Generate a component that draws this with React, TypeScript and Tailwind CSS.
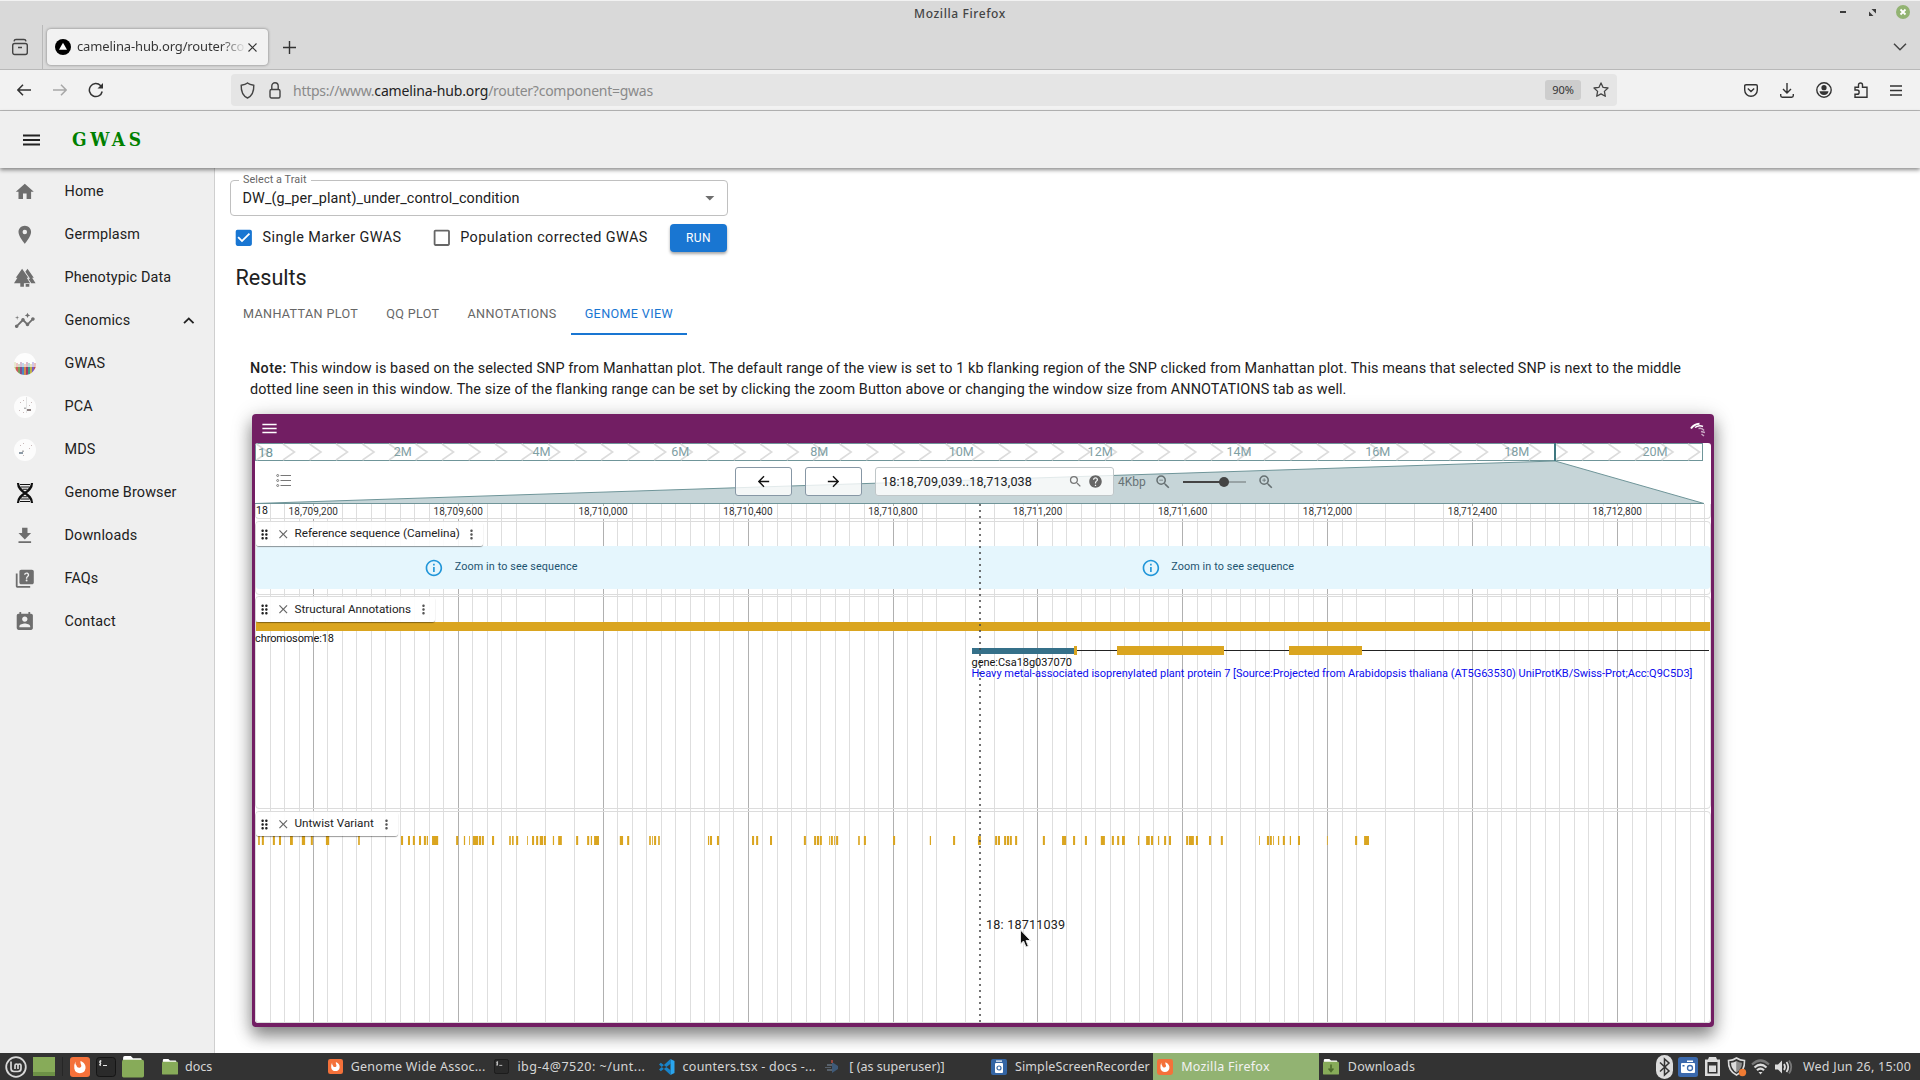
import React from "react";
import {
  MdHome, MdRoom, MdForest, MdInsights, MdKeyboardArrowUp, MdDownload, MdQuiz, MdPermContactCalendar,
  MdDragIndicator, MdClose, MdMoreVert, MdInfoOutline, MdSearch, MdHelp, MdZoomIn, MdZoomOut,
  MdArrowBack, MdArrowForward, MdMenu, MdArrowDropDown, MdCheckBox, MdCheckBoxOutlineBlank,
} from "react-icons/md";

const ubuntu = "font-['Noto_Sans',sans-serif]";

/* ---------- Browser chrome ---------- */

function TitleBar() {
  return (
    <div className="relative flex h-[25px] shrink-0 items-center justify-center border-t border-[#f2f2f2] bg-[#d9d9d9] pt-[2px]">
      <span className={`${ubuntu} text-[12px] font-medium tracking-[0.6px] text-[#444]`}>Mozilla Firefox</span>
      <div className="absolute right-[10px] top-[4px] flex items-center">
        <span className="mr-[23px] h-[2px] w-[6px] bg-[#3c3c3c]" />
        <svg className="mr-[20px]" width="7" height="7" viewBox="0 0 7 7">
          <path d="M2.5 0H7V4.5ZM0 2.5V7H4.500Z" fill="#3c3c3c" />
        </svg>
        <svg width="14" height="14" viewBox="0 0 14 14">
          <circle cx="7" cy="7" r="7" fill="#92b372" />
          <path d="M4.500 4.500l5 5M9.500 4.500l-5 5" stroke="#fff" strokeWidth="1.8" />
        </svg>
      </div>
    </div>
  );
}

function TabBar() {
  return (
    <div className="flex h-[45px] shrink-0 border-b border-[#b9b9b9] bg-[#d9d9d9]">
      <div className="flex w-[43px] items-center justify-center border-r border-[#b9b9b9] pr-[2px]">
        <svg width="18" height="18" viewBox="0 0 18 18" fill="none" stroke="#444" strokeWidth="1.4">
          <rect x="1.700" y="5.500" width="14.600" height="11" rx="2" />
          <path d="M3 3.300Q3.300 1.500 5 1.500H13Q14.700 1.500 15 3.300M7 9.500H11" />
        </svg>
      </div>
      <div className="ml-[4px] mt-[4px] flex h-[36px] w-[221px] items-center rounded-[4px] bg-[#f2f2f2] pl-[8px] shadow-[0_0_3px_rgba(0,0,0,0.45)]">
        <svg width="16" height="16" viewBox="0 0 16 16">
          <circle cx="8" cy="8" r="8" fill="#000" />
          <path d="M8 3.800L12 10.800H4Z" fill="#fff" />
        </svg>
        <div className={`${ubuntu} ml-[6px] w-[167px] overflow-hidden whitespace-nowrap bg-[linear-gradient(to_right,#333_86%,#e0e0e0_100%)] bg-clip-text text-[13px] tracking-[-0.14px] text-transparent`}>
          camelina-hub.org/router?co
        </div>
        <svg className="ml-[4px]" width="9" height="9" viewBox="0 0 9 9" stroke="#333" strokeWidth="1.1">
          <path d="M.5.5l8 8M8.500.5l-8 8" />
        </svg>
      </div>
      <svg className="ml-[15px] mt-[16px]" width="13" height="13" viewBox="0 0 13 13" stroke="#333" strokeWidth="1.4">
        <path d="M6.500 0v13M0 6.500h13" />
      </svg>
      <svg className="ml-auto mr-[13px] mt-[18px]" width="14" height="8" viewBox="0 0 14 8" fill="none" stroke="#444" strokeWidth="1.5">
        <path d="M1 .8l6 6 6-6" />
      </svg>
    </div>
  );
}

function NavBar() {
  return (
    <div className="flex h-[41px] shrink-0 items-center border-b border-[#b9b9b9] bg-[#f2f2f2]">
      <div className="flex w-[231px] items-center pl-[17px]">
        <svg width="14" height="12" viewBox="0 0 14 12" fill="none" stroke="#333" strokeWidth="1.5">
          <path d="M14 6H1M6 .8L.9 6 6 11.200" />
        </svg>
        <svg className="ml-[22px]" width="14" height="12" viewBox="0 0 14 12" fill="none" stroke="#a8a8a8" strokeWidth="1.5">
          <path d="M0 6H13M8 .8L13.100 6 8 11.200" />
        </svg>
        <svg className="ml-[21px]" width="16" height="16" viewBox="0 0 16 16" fill="none" stroke="#333" strokeWidth="1.5">
          <path d="M14.200 9.500A6.500 6.500 0 1 1 12.500 3.500L14 5" />
          <path d="M15 1v5.500H9.500Z" fill="#333" stroke="none" />
        </svg>
      </div>
      <div className="flex h-[32px] w-[1386px] items-center rounded-[4px] bg-[#e5e5e5] pl-[9px] pr-[8px]">
        <svg width="15" height="17" viewBox="0 0 15 17" fill="none" stroke="#444" strokeWidth="1.4">
          <path d="M7.500 1C6 2.300 3.500 3 1.200 3.300 1 9.500 2.500 13.800 7.500 16 12.500 13.800 14 9.500 13.800 3.300 11.500 3 9 2.300 7.500 1Z" />
        </svg>
        <svg className="ml-[14px]" width="12" height="17" viewBox="0 0 12 17" fill="none" stroke="#444" strokeWidth="1.4">
          <rect x="1" y="7.500" width="10" height="8.500" rx="1.500" />
          <path d="M2.800 7.500V4a3.200 3.200 0 0 1 6.400 0V7.500" />
        </svg>
        <span className={`${ubuntu} ml-[12px] whitespace-nowrap text-[14px] tracking-[-0.26px] text-[#8a8a8a]`}>
          https://www.<span className="tracking-[-0.15px] text-[#222]">camelina-hub.org</span>/router?component=gwas
        </span>
        <span className={`${ubuntu} ml-auto flex h-[20px] w-[36px] items-center justify-center rounded-[3px] bg-[#cdcdcd] text-[11px] text-[#333]`}>90%</span>
        <svg className="ml-[12px]" width="16" height="16" viewBox="0 0 16 16" fill="none" stroke="#444" strokeWidth="1.3" strokeLinejoin="round">
          <path d="M8 .9l2.100 4.500 4.900.6-3.600 3.400.9 4.900L8 11.900l-4.300 2.400.9-4.900L1 6l4.900-.6Z" />
        </svg>
      </div>
      <div className="ml-auto mr-[18px] flex items-center gap-[22px] text-[#333]">
        <svg width="14" height="13" viewBox="0 0 14 13" fill="none" stroke="currentColor" strokeWidth="1.4">
          <path d="M2 .8H12Q13.300.8 13.300 2V6A6.300 6.200 0 0 1 .7 6V2Q.7.8 2 .8ZM3.800 4.500L7 7.500l3.200-3" />
        </svg>
        <svg width="14" height="15" viewBox="0 0 14 15" fill="none" stroke="currentColor" strokeWidth="1.4">
          <path d="M7 0V10M3 6l4 4 4-4M.7 11v1.500Q.7 14.200 2.300 14.200h9.400q1.600 0 1.600-1.700V11" />
        </svg>
        <svg width="16" height="16" viewBox="0 0 16 16" fill="none" stroke="currentColor" strokeWidth="1.4">
          <circle cx="8" cy="8" r="7.200" />
          <circle cx="8" cy="5.700" r="2.600" fill="currentColor" stroke="none" />
          <path d="M3.500 9.300h9Q12 13 8 13T3.500 9.300Z" fill="currentColor" stroke="none" />
        </svg>
        <svg width="14" height="16" viewBox="0 0 14 16" fill="none" stroke="currentColor" strokeWidth="1.4">
          <path d="M1 8V5.200h3.500V3a2 2 0 0 1 4 0V5.200H13V15.200H1V12.300H3a2.100 2.100 0 0 0 0-4.300Z" />
        </svg>
        <svg width="12" height="11" viewBox="0 0 12 11" stroke="currentColor" strokeWidth="1.3">
          <path d="M0 1h12M0 5.500h12M0 10h12" />
        </svg>
      </div>
    </div>
  );
}

/* ---------- Sidebar ---------- */

const DnaIcon = () => (
  <svg width="18" height="20" viewBox="0 0 18 20" fill="none" stroke="#111">
    <path d="M2 0C2 10 16 10 16 20M16 0C16 10 2 10 2 20" strokeWidth="2.200" />
    <path d="M4 1.500h10M4.500 4h9M4.500 16h9M4 18.500h10M6.500 6.200h5M6.500 13.800h5" strokeWidth="1.100" />
  </svg>
);

const GwasThumb = () => (
  <svg width="22" height="22" viewBox="0 0 22 22">
    <clipPath id="thumb"><circle cx="11" cy="11" r="11" /></clipPath>
    <g clipPath="url(#thumb)">
      <rect width="22" height="22" fill="#fdfdfd" />
      {["#b9c27a", "#d05a5a", "#7a9a5a", "#8a4a8a", "#4a8ac0", "#d08a4a", "#a03a6a", "#3a9a8a", "#c0b04a", "#7a5ac0", "#c04a4a"].map((c, i) => (
        <g key={i} fill={c}>
          <rect x={i * 2} y="14" width="2" height="8" />
          <rect x={i * 2} y={9 + (i % 3)} width="2" height="6" opacity="0.35" />
        </g>
      ))}
    </g>
  </svg>
);

const ScatterThumb = ({ flip = false }: { flip?: boolean }) => (
  <svg width="22" height="22" viewBox="0 0 22 22">
    <circle cx="11" cy="11" r="11" fill="#fcfcfc" />
    {!flip && <path d="M12.500 1v16" stroke="#e4e4e4" />}
    <g fill="#c9b9b9">
      <rect x="6" y="6" width="1" height="1" /><rect x="9" y="4" width="1" height="1" /><rect x="15" y="9" width="1" height="1" />
      <rect x="5" y="14" width="1" height="1" /><rect x="9" y="16" width="1" height="1" /><rect x="17" y="6" width="1" height="1" />
    </g>
    <rect x={flip ? 5 : 13} y="13" width="4" height="2" fill={flip ? "#8c9aa6" : "#8c8080"} />
    <rect x={flip ? 8 : 10} y="11.500" width="2" height="1.500" fill="#b3b3b3" />
  </svg>
);

const menu: { label: string; icon: React.ReactNode; open?: boolean }[] = [
  { label: "Home", icon: <MdHome /> },
  { label: "Germplasm", icon: <MdRoom /> },
  { label: "Phenotypic Data", icon: <MdForest /> },
  { label: "Genomics", icon: <MdInsights />, open: true },
  { label: "GWAS", icon: <GwasThumb /> },
  { label: "PCA", icon: <ScatterThumb /> },
  { label: "MDS", icon: <ScatterThumb flip /> },
  { label: "Genome Browser", icon: <DnaIcon /> },
  { label: "Downloads", icon: <MdDownload /> },
  { label: "FAQs", icon: <MdQuiz /> },
  { label: "Contact", icon: <MdPermContactCalendar /> },
];

function Sidebar() {
  return (
    <nav className="w-[215px] shrink-0 border-r border-[#cfcfcf] bg-[#efefef] pt-[2px]">
      {menu.map((m) => (
        <div key={m.label} className="flex h-[43px] items-center pl-[14px]">
          <span className="flex w-[22px] items-center justify-center text-[21.6px] text-[#6e6e6e]">{m.icon}</span>
          <span className="ml-[28.5px] whitespace-nowrap text-[14.4px] tracking-[0.135px] text-[#212121]">{m.label}</span>
          {m.open && <MdKeyboardArrowUp className="ml-auto mr-[14px] text-[21.6px] text-[#222]" />}
        </div>
      ))}
    </nav>
  );
}

/* ---------- GWAS form ---------- */

function TraitForm() {
  return (
    <>
      <div className="relative mt-[12px] flex h-[36px] w-[498px] shrink-0 items-center rounded-[4px] border border-[#c0c0c0] pl-[11.5px] pr-[6px]">
        <span className="absolute -top-[9px] left-[8px] bg-white px-[4px] text-[10.8px] leading-[15px] tracking-[0.1px] text-[#666]">Select a Trait</span>
        <span className="pt-[2px] text-[14.4px] tracking-[0.105px] text-[#212121]">DW_(g_per_plant)_under_control_condition</span>
        <MdArrowDropDown className="ml-auto text-[21.6px] text-[#6e6e6e]" />
      </div>
      <div className="mt-[8px] flex h-[28px] shrink-0 items-center pl-[3px]">
        <MdCheckBox className="text-[21.6px] text-[#1976d2]" />
        <span className="ml-[8px] w-[140px] whitespace-nowrap text-[14.4px] tracking-[0.41px] text-[#212121]">Single Marker GWAS</span>
        <MdCheckBoxOutlineBlank className="ml-[28px] text-[21.6px] text-[#666]" />
        <span className="ml-[8px] w-[190px] whitespace-nowrap text-[14.4px] tracking-[0.41px] text-[#212121]">Population corrected GWAS</span>
        <button className="ml-auto mr-[1193px] flex h-[28px] w-[57px] items-center justify-center rounded-[4px] bg-[#1976d2] text-[12px] tracking-[0.36px] text-white shadow-[0_2px_3px_rgba(0,0,0,0.35)]">RUN</button>
      </div>
    </>
  );
}

function Tabs() {
  const base = "flex h-[43px] items-center whitespace-nowrap px-[14px] pt-[2px] text-[12.6px] tracking-[0.36px]";
  return (
    <div className="-ml-[1px] mt-[1px] flex shrink-0">
      {["MANHATTAN PLOT", "QQ PLOT", "ANNOTATIONS"].map((t) => (
        <span key={t} className={`${base} text-[#666]`}>{t}</span>
      ))}
      <span className="flex h-[43px] items-center whitespace-nowrap border-b-2 border-[#1976d2] px-[14px] pt-[4px] text-[12.6px] tracking-[0.36px] text-[#1976d2]">
        GENOME VIEW
      </span>
    </div>
  );
}

/* ---------- Genome view ---------- */

const PITCH = 14.49;
const skipped = [15, 17, 19, 44, 46, 48, 73, 75, 77];
const lines = Array.from({ length: 100 }, (_, i) => i - 3).filter((i) => !skipped.includes(i) && 313 + i * PITCH < 1710);

const variantsA: [number, number][] = [
  [20, 24], [29, 34], [56, 61], [71, 76], [98, 105], [127, 135], [149, 154], [186, 194], [265, 269], [370, 375], [387, 392], [399, 404],
  [414, 419], [426, 431], [433, 436], [446, 461], [505, 510], [524, 527], [537, 539], [546, 559], [561, 566], [568, 573], [593, 598],
  [635, 639], [642, 646], [652, 657], [679, 681], [691, 696], [701, 706], [710, 718], [720, 725], [742, 745], [755, 764], [799, 804],
  [826, 831], [835, 838], [843, 855], [906, 914], [924, 929], [978, 982], [985, 987], [990, 995], [1000, 1004], [1122, 1125],
  [1127, 1132], [1144, 1149], [1230, 1235], [1240, 1245], [1274, 1279], [1357, 1362], [1382, 1387], [1389, 1394], [1396, 1401],
  [1419, 1421], [1423, 1428], [1431, 1433], [1436, 1441], [1490, 1494], [1504, 1509],
];
const variantsB: [number, number][] = [
  [32, 37], [122, 125], [179, 184], [240, 247], [282, 287], [289, 294], [304, 309], [311, 316], [318, 323], [331, 336], [399, 404],
  [446, 456], [473, 478], [502, 507], [541, 551], [568, 573], [581, 586], [593, 600], [632, 635], [652, 661], [664, 669], [681, 684],
  [696, 701], [708, 713], [750, 755], [757, 769], [774, 779], [806, 811], [835, 840], [929, 931], [948, 953], [955, 960], [963, 965],
  [975, 978], [987, 992], [1004, 1007], [1024, 1029], [1095, 1097], [1164, 1169], [1186, 1198],
];
const variants = [
  ...variantsA.map(([a, b]) => [250 + a / 2.45, (b - a) / 2.45]),
  ...variantsB.map(([a, b]) => [880 + a / 2.45, (b - a) / 2.45]),
];

/* label centres of the chromosome overview, 2M to 20M */
const megabases = [402.8, 541.5, 680.2, 819.3, 961.3, 1100.2, 1239, 1377.8, 1516.8, 1655];

function Overview() {
  return (
    <svg className="absolute left-0 top-0" width="1456" height="61" viewBox="255 443 1456 61">
      <path d="M1555 461L255 503.500H1704Z" fill="#c6d5d8" stroke="#6f9599" />
      <rect x="255.500" y="443.500" width="1447" height="17" fill="#fff" stroke="#6f9599" />
      <g fill="none" stroke="#dcdcdc" strokeWidth="1.600">
        {Array.from({ length: 55 }, (_, k) => {
          const t = 268 + k * 26.51;
          return <path key={k} d={`M${t - 11.5} 444L${t} 452L${t - 11.5} 460`} />;
        })}
      </g>
      <g fill="#7fa0a4" fontSize="12.600" textAnchor="middle">
        {megabases.map((x, k) => (
          <text key={k} x={x} y="455.500">{`${(k + 1) * 2}M`}</text>
        ))}
      </g>
      <text x="258" y="457" fill="#6f9599" fontSize="13.500">18</text>
      <rect x="1554" y="443" width="2" height="18" fill="#3f7880" />
    </svg>
  );
}

function Grid() {
  return (
    <svg className="absolute left-0 top-0" width="1456" height="519" viewBox="255 504 1456 519" shapeRendering="crispEdges">
      {lines.map((i) => (
        <rect
          key={i}
          x={i % 10 === 0 ? Math.floor(313.45 + i * PITCH) : Math.round(313 + i * PITCH)}
          y="504" width="1" height="519"
          fill={i % 10 === 0 ? "#b0b0b0" : "#dedede"}
        />
      ))}
    </svg>
  );
}

function TrackLabel({ name, className }: { name: string; className: string }) {
  return (
    <div className={`relative z-10 flex items-center rounded-[3px] bg-white/90 shadow-[0_1px_1px_rgba(0,0,0,0.4)] ${className}`}>
      <MdDragIndicator className="ml-[0.500px] text-[15px] text-[#222]" />
      <MdClose className="ml-[4px] text-[14.5px] text-[#666]" />
      <span className="ml-[4.500px] whitespace-nowrap text-[11.7px] tracking-[0px] text-[#222]">{name}</span>
      <MdMoreVert className="ml-auto mr-[4px] text-[15px] text-[#555]" />
    </div>
  );
}

function ZoomNotice({ className }: { className: string }) {
  return (
    <div className={`flex items-center rounded-[3px] bg-[#e5f6fd] pb-[1px] ${className}`}>
      <MdInfoOutline className="mt-[2px] text-[19.8px] text-[#2196d9]" />
      <span className="ml-[11px] text-[10.8px] tracking-[0.1px] text-[#1d5470]">Zoom in to see sequence</span>
    </div>
  );
}

function Toolbar() {
  const nav = "flex h-[29px] w-[57px] items-center justify-center rounded-[3px] border border-[#8797a5] bg-white/80 text-[17px] text-[#111]";
  return (
    <div className="relative flex h-[43px] items-start pt-[6px]">
      <svg className="ml-[21px] mt-[7px]" width="15" height="13" viewBox="0 0 15 13" fill="none" stroke="#777">
        <path d="M4.500 1.500H15M4.500 6.500H15M4.500 11.500H15" strokeWidth="1.200" />
        <circle cx="1.700" cy="1.500" r="1" /><circle cx="1.700" cy="6.500" r="1" /><circle cx="1.700" cy="11.500" r="1" />
      </svg>
      <div className={`ml-[444px] ${nav}`}><MdArrowBack /></div>
      <div className={`ml-[13px] ${nav}`}><MdArrowForward /></div>
      <div className="ml-[13px] flex h-[29px] w-[239px] items-center rounded-[3px] border border-[#bfc6c8] bg-white/80 pl-[6px]">
        <span className="w-[148px] whitespace-nowrap pt-[1px] text-[12.6px] tracking-[0.12px] text-[#222]">18:18,709,039..18,713,038</span>
        <MdSearch className="ml-[38px] text-[15px] text-[#777]" />
        <MdHelp className="ml-[5px] text-[15px] text-[#666]" />
      </div>
      <div className="flex h-[29px] items-center">
        <span className="ml-[4px] w-[26px] whitespace-nowrap text-[12px] text-[#667276]">4Kbp</span>
        <MdZoomOut className="ml-[10px] text-[18px] text-[#667072]" />
        <div className="relative ml-[11px] flex h-[10px] w-[63px] items-center">
          <span className="h-[2px] w-[41px] bg-[#444]" />
          <span className="h-[2px] w-[22px] bg-[#98a3a5]" />
          <span className="absolute left-[36px] top-0 h-[10px] w-[10px] rounded-full bg-[#444]" />
        </div>
        <MdZoomIn className="ml-[11px] text-[18px] text-[#667072]" />
      </div>
    </div>
  );
}

function GenomeView() {
  return (
    <section className="ml-[22px] h-[613px] w-[1462px] shrink-0 rounded-[4px] bg-[#721e63] px-[3px] pb-[4px] shadow-[0_9px_16px_rgba(0,0,0,0.4),0_3px_22px_rgba(0,0,0,0.2)]">
      <header className="flex h-[29px] items-center justify-between pl-[5px] pr-[5px]">
        <MdMenu className="text-[19px] text-white" />
        <svg className="mt-[3px]" width="16" height="16" viewBox="0 0 16 16" fill="none" stroke="#fff">
          <path d="M1 6.500Q4 2 9.500 1.800" strokeWidth="2" />
          <path d="M5 5.500Q9 2.800 13 4.500" strokeWidth="1.500" />
          <path d="M8.500 6.500Q12 5.500 14 8.500M11 9.500L15 10.500M11.500 12L14 14" strokeWidth="1.500" stroke="#c9a8c4" />
        </svg>
      </header>
      <div className="relative flex h-[580px] flex-col overflow-hidden rounded-[3px] bg-white">
        <div className="relative h-[61px] shrink-0 pt-[18px]">
          <Overview />
          <Toolbar />
        </div>
        <div className="relative flex h-[519px] flex-col">
          <Grid />
          {/* coordinate scale */}
          <div className="relative flex h-[15px] items-start rounded-b-[4px] border border-t-0 border-[#dcdcdc]">
            <span className="w-[13px] bg-white text-[10.5px] leading-[13px] text-[#111]">18</span>
            {Array.from({ length: 10 }, (_, k) => (
              <span
                key={k}
                className={`${k ? "ml-[94.9px]" : "ml-[19.3px]"} mt-[2px] w-[50px] shrink-0 whitespace-nowrap bg-white text-center text-[10px] leading-[12px] tracking-[0.05px] text-[#333]`}
              >
                {(18709200 + k * 400).toLocaleString("en-US")}
              </span>
            ))}
          </div>
          {/* reference sequence */}
          <div className="relative mt-[2px] h-[74px] rounded-[4px] border border-[#dcdcdc]">
            <TrackLabel name="Reference sequence (Camelina)" className="h-[24px] w-[227px]" />
            <div className="flex h-[43px]">
              <ZoomNotice className="w-[870px] pl-[168px]" />
              <ZoomNotice className="w-[585px] shrink-0 pl-[15.500px]" />
            </div>
          </div>
          {/* structural annotations */}
          <div className="relative mt-[1px] h-[213px] rounded-[4px] border border-[#dcdcdc]">
            <TrackLabel name="Structural Annotations" className="h-[25px] w-[179px]" />
            <svg className="absolute -left-px top-[25px]" width="1456" height="60" viewBox="255 622 1456 60" shapeRendering="crispEdges">
              <rect x="256" y="622" width="1454" height="9" fill="#daa520" />
              <rect x="972" y="650" width="737" height="1" fill="#222" />
              <rect x="972" y="648" width="102" height="6" fill="#357089" />
              <rect x="1074" y="646" width="3" height="9" fill="#daa520" />
              <rect x="1117" y="646" width="107" height="9" fill="#daa520" />
              <rect x="1289" y="646" width="73" height="9" fill="#daa520" />
              <g fontSize="11">
                <text x="255" y="642" fill="#111" textLength="79">chromosome:18</text>
                <text x="971.500" y="666" fill="#111" textLength="100.500">gene:Csa18g037070</text>
                <text x="971.500" y="677" fill="#0c0cee" textLength="721">
                  Heavy metal-associated isoprenylated plant protein 7 [Source:Projected from Arabidopsis thaliana (AT5G63530) UniProtKB/Swiss-Prot;Acc:Q9C5D3]
                </text>
              </g>
            </svg>
          </div>
          {/* variants */}
          <div className="relative mt-[2px] h-[212px] rounded-[4px] border border-[#dcdcdc]">
            <TrackLabel name="Untwist Variant" className="h-[24px] w-[142px]" />
            <svg className="absolute -left-px top-[24px]" width="1456" height="9" viewBox="255 836 1456 9">
              {variants.map(([x, w], i) => (
                <rect key={i} x={x} y="836" width={w} height="9" fill="#daa520" />
              ))}
            </svg>
          </div>
          {/* centre line and its read-out */}
          <svg className="absolute left-[724px] top-0 z-20" width="2" height="519" viewBox="0 0 2 519">
            <path d="M1 0V519" stroke="#444" strokeWidth="1.500" strokeDasharray="2 4" />
          </svg>
          <span className="absolute left-[731px] top-[412px] z-20 whitespace-nowrap text-[12.6px] leading-[18px] tracking-[0.2px] text-[#222]">18: 18711039</span>
          <svg className="absolute left-[764px] top-[425px] z-30" width="14" height="20" viewBox="0 0 14 20">
            <path d="M1.500 1V15L4.500 12 7 18 9.300 17 7 11.500H11.500Z" fill="#111" stroke="#e8e8e8" strokeWidth="1" />
          </svg>
        </div>
      </div>
    </section>
  );
}

/* ---------- Desktop panel ---------- */

const FirefoxIcon = ({ size }: { size: number }) => (
  <svg width={size} height={size} viewBox="0 0 20 20">
    <rect width="20" height="20" rx="3" fill="#f4713a" />
    <path d="M5.500 4.500Q5 7 6.500 8.500C7 11 10 11.500 11.200 9.500 11.800 7.500 10 7 10.500 4 14 5.500 16 8 15.500 11.500A5.700 5.700 0 0 1 4.300 11.500Q4 7 5.500 4.500Z" fill="#fff" />
  </svg>
);
const TerminalIcon = ({ size }: { size: number }) => (
  <svg width={size} height={size} viewBox="0 0 20 20">
    <rect x=".5" y=".5" width="19" height="19" rx="3" fill="#2a2a2a" stroke="#151515" />
    <path d="M5.500 4Q3 4 3.500 5.200T5 6.500 3 8M4.300 3v6M7 8.500h4" stroke="#e6e6e6" fill="none" />
  </svg>
);
const FolderIcon = ({ size, down = false }: { size: number; down?: boolean }) => (
  <svg width={size} height={size} viewBox="0 0 20 20">
    <path d="M1 3V1.500Q1 0 2.500 0H8L10 2H17Q18 2 18 4H1Z" fill="#fff" />
    <rect y="3.500" width="20" height="16" rx="1.500" fill="#87ab59" />
    {down && <path d="M10 7v8M7 12l3 3.500 3-3.500" stroke="#4d6b2c" strokeWidth="2" fill="none" />}
  </svg>
);
const CodeIcon = () => (
  <svg width="16" height="16" viewBox="0 0 16 16">
    <path d="M11.500 0L15.500 2V14L11.500 16Z" fill="#2aa5ee" />
    <path d="M11.500 0L0 10.500 1.800 12.200 12 4.500ZM11.500 16L0 5.500 1.800 3.800 12 11.500Z" fill="#1883c9" />
  </svg>
);
const PluginIcon = () => (
  <svg width="16" height="16" viewBox="0 0 16 16">
    <path d="M2 5h5v2H2zM0 8h6v1H0zM2 10h5v2H2z" fill="#58616b" />
    <path d="M7 3l6 4v3l-6 4z" fill="#3f5a78" /><path d="M6 1h2v3H6z" fill="#96473f" />
  </svg>
);
const RecorderIcon = () => (
  <svg width="16" height="16" viewBox="0 0 16 16">
    <rect width="16" height="16" rx="2" fill="#3465a4" />
    <rect x="4" y="4" width="8" height="10" rx="1" fill="#fff" /><rect x="5" y="1.500" width="6" height="1.200" fill="#fff" />
    <circle cx="8" cy="9" r="2" fill="none" stroke="#3465a4" strokeWidth="1.200" />
  </svg>
);

const tasks: { label: string; icon: React.ReactNode; cell: string; text: string }[] = [
  { label: "docs", icon: <FolderIcon size={16} />, cell: "pl-[3px]", text: "ml-[7px] tracking-[0px]" },
  { label: "Genome Wide Assoc...", icon: <FirefoxIcon size={15} />, cell: "pl-[3px]", text: "ml-[7px] tracking-[0.25px]" },
  { label: "ibg-4@7520: ~/unt...", icon: <TerminalIcon size={15} />, cell: "pl-[3px]", text: "ml-[8px] tracking-[0.5px]" },
  { label: "counters.tsx - docs -...", icon: <CodeIcon />, cell: "pl-[3px]", text: "ml-[7.500px] tracking-[0.25px]" },
  { label: "[ (as superuser)]", icon: <PluginIcon />, cell: "pl-[3px]", text: "ml-[8.500px] tracking-[0.03px]" },
  { label: "SimpleScreenRecorder", icon: <RecorderIcon />, cell: "pl-[4px]", text: "ml-[7.500px] tracking-[0.12px]" },
  { label: "Mozilla Firefox", icon: <FirefoxIcon size={16} />, cell: "bg-[#92b372] pl-[4px] text-[#f2f2f2]", text: "ml-[8px] tracking-[0.28px]" },
  { label: "Downloads", icon: <FolderIcon size={16} down />, cell: "pl-[4px]", text: "ml-[9px] tracking-[0.2px]" },
];

function Taskbar() {
  return (
    <footer className={`${ubuntu} relative z-30 flex h-[27px] shrink-0 items-center bg-[#333] text-[12.5px] text-[#d6d6d6]`}>
      <div className="flex w-[159px] items-center pl-[5px]">
        <svg width="22" height="22" viewBox="0 0 22 22" fill="none" stroke="#d8d8d8">
          <circle cx="11" cy="11" r="9.800" strokeWidth="1.800" />
          <path d="M6 5.500V12.500Q6 15.500 9 15.500H13Q16 15.500 16 12.500V9.500Q16 8 14.500 8T13 9.500V13M13 9.500Q13 8 11.500 8T10 9.500V13" strokeWidth="1.700" />
        </svg>
        <span className="ml-[6px] h-[19px] w-[22px] border-b-[4px] border-[#6d9146] bg-[#87ab59]" />
        <span className="ml-[7px] mr-[7px] h-[19px] w-px bg-[#262626]" />
        <FirefoxIcon size={20} />
        <span className="ml-[6px] mr-[6px]"><TerminalIcon size={20} /></span>
        <FolderIcon size={22} />
      </div>
      {tasks.map((t) => (
        <div key={t.label} className={`flex h-full w-[165.700px] shrink-0 items-center ${t.cell}`}>
          <span className="flex w-[16px] justify-center">{t.icon}</span>
          <span className={`whitespace-nowrap pt-[1px] ${t.text}`}>{t.label}</span>
        </div>
      ))}
      <div className="ml-auto flex items-center pr-[5px]">
        <svg width="17" height="24" viewBox="0 0 17 24">
          <rect width="17" height="24" rx="8.500" fill="#dcdcdc" />
          <path d="M4 7.500l9 8.500-4.500 4V4L13 8l-9 8.500" fill="none" stroke="#333" strokeWidth="1.500" />
        </svg>
        <svg className="ml-[5px]" width="20" height="20" viewBox="0 0 20 20">
          <rect width="20" height="20" rx="2.500" fill="#3b69ad" />
          <rect x="3" y="6" width="14" height="10" rx="1" fill="#fff" /><rect x="9" y="3.500" width="6" height="1.500" fill="#fff" />
          <circle cx="12" cy="11" r="2.500" fill="none" stroke="#3b69ad" strokeWidth="1.300" /><rect x="4.500" y="8" width="2" height="1.500" fill="#3b69ad" />
        </svg>
        <svg className="ml-[7px]" width="15" height="19" viewBox="0 0 15 19">
          <path d="M4 0h7l1 2.500h3V19H0V2.500h3Z" fill="#dcdcdc" /><path d="M2.500 5h10v11.500h-10z" fill="#333" /><path d="M4 8.500h7V15H4z" fill="#dcdcdc" />
        </svg>
        <svg className="ml-[7px]" width="20" height="20" viewBox="0 0 20 20">
          <path d="M9.500 1Q6 3.500 1.500 3.500 1 14 9.500 18 18 14 17.500 3.500 13 3.500 9.500 1Z" fill="none" stroke="#dcdcdc" strokeWidth="1.600" />
          <path d="M9.500 4Q12 5.500 15 5.800 15 12 9.500 15.500Z" fill="#8c8c8c" /><path d="M9.500 4Q7 5.500 4 5.800 4 12 9.500 15.500Z" fill="#dcdcdc" />
          <circle cx="15.500" cy="15.500" r="3.700" fill="#f07b33" />
        </svg>
        <svg className="ml-[4px]" width="19" height="16" viewBox="0 0 19 16" fill="none" strokeWidth="2.200">
          <path d="M1 5.500Q9.500-2.500 18 5.500" stroke="#777" /><path d="M3.500 8.500Q9.500 3 15.500 8.500M6 11.300Q9.500 8 13 11.300" stroke="#dcdcdc" /><path d="M9.500 15.500l-2-2.500h4z" fill="#dcdcdc" />
        </svg>
        <svg className="ml-[5px]" width="18" height="16" viewBox="0 0 18 16" fill="none" strokeWidth="1.800">
          <path d="M0 5.500h3L7 1.500v13L3 10.500H0z" fill="#dcdcdc" />
          <path d="M9 5q2 3 0 6M11.500 3q3.500 5 0 10" stroke="#dcdcdc" /><path d="M14 1.500q4.500 6.500 0 13" stroke="#777" />
        </svg>
        <span className="ml-[10px] w-[112px] whitespace-nowrap pt-[1px] text-[12.5px] tracking-[0.22px]">Wed Jun 26, 15:00</span>
      </div>
    </footer>
  );
}

export default function App() {
  return (
    <div className="flex h-[1080px] w-[1920px] flex-col overflow-hidden bg-white font-['Roboto',sans-serif]">
      <TitleBar />
      <TabBar />
      <NavBar />
      <header className="relative z-10 flex h-[57px] shrink-0 items-center bg-[#efefef] pl-[23px] shadow-[0_2px_4px_rgba(0,0,0,0.45)]">
        <svg width="17" height="12" viewBox="0 0 17 12" stroke="#222" strokeWidth="1.800">
          <path d="M0 1.500h17M0 6h17M0 10.500h17" />
        </svg>
        <h1 className="ml-[32px] font-['DejaVu_Serif',serif] text-[19px] font-bold tracking-[3.600px] text-[#008000] [font-stretch:condensed]">GWAS</h1>
      </header>
      <div className="flex min-h-0 flex-1">
        <Sidebar />
        <main className="flex min-w-0 flex-1 flex-col pl-[15px]">
          <TraitForm />
          <h2 className="mt-[12px] shrink-0 pl-[5.500px] text-[21.6px] leading-[27px] text-[#212121]">Results</h2>
          <Tabs />
          <p className="mb-[14px] mt-[23px] shrink-0 pl-[20px] text-[14.4px] leading-[21px] tracking-[0.105px] text-[#212121]">
            <span className="font-medium tracking-[0.4px]">Note:</span> This window is based on the selected SNP from Manhattan plot. The default range of the view is set to 1 kb flanking region of the SNP clicked from Manhattan plot. This means that selected SNP is next to the middle
            <br />
            dotted line seen in this window. The size of the flanking range can be set by clicking the zoom Button above or changing the window size from ANNOTATIONS tab as well.
          </p>
          <GenomeView />
        </main>
      </div>
      <Taskbar />
    </div>
  );
}
